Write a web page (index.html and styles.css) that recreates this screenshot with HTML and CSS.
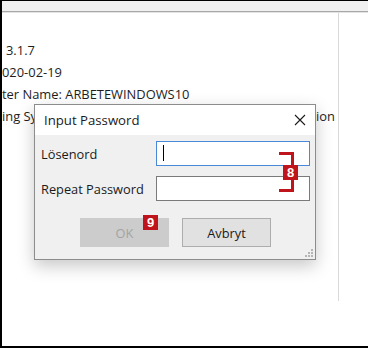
FILE: index.html
```html
<!DOCTYPE html>
<html>
<head>
<meta charset="utf-8">
<link rel="stylesheet" href="styles.css">
</head>
<body>
<div class="frame">
  <div class="topbar"></div>
  <div class="content">
    <div class="panel">
      <div class="line l1">3.1.7</div>
      <div class="line">020-02-19</div>
      <div class="line">ter Name: ARBETEWINDOWS10</div>
      <div class="line split"><span>ing Sy</span><span>ion</span></div>
    </div>
  </div>

  <div class="dialog">
    <div class="titlebar">
      <span class="title">Input Password</span>
      <svg class="close" width="12" height="12" viewBox="0 0 12 12"><path d="M1 1L11 11M11 1L1 11" stroke="#1a1a1a" stroke-width="1.1" fill="none"/></svg>
    </div>
    <div class="body">
      <div class="form">
        <label class="lbl">Lösenord</label>
        <div class="input focus"><span class="caret"></span></div>
        <label class="lbl">Repeat Password</label>
        <div class="input"></div>
      </div>
      <div class="buttons">
        <div class="btn disabled">OK</div>
        <div class="btn">Avbryt</div>
      </div>
    </div>
    <svg class="grip" width="10" height="10" viewBox="0 0 10 10">
      <rect x="8" y="2" width="2" height="2" fill="#b5b5b5"/>
      <rect x="5" y="5" width="2" height="2" fill="#b5b5b5"/>
      <rect x="8" y="5" width="2" height="2" fill="#b5b5b5"/>
      <rect x="2" y="8" width="2" height="2" fill="#b5b5b5"/>
      <rect x="5" y="8" width="2" height="2" fill="#b5b5b5"/>
      <rect x="8" y="8" width="2" height="2" fill="#b5b5b5"/>
    </svg>
  </div>

  <div class="bracket"></div>
  <div class="badge b8">8</div>
  <div class="badge b9">9</div>
</div>
</body>
</html>
```

FILE: styles.css
```css
html, body {
  margin: 0;
  padding: 0;
  background: #ffffff;
}
.frame {
  position: relative;
  width: 368px;
  height: 348px;
  box-sizing: border-box;
  border-top: 1px solid #000;
  border-left: 2px solid #000;
  border-bottom: 2px solid #000;
  overflow: hidden;
  font-family: "Open Sans", "Noto Sans", sans-serif;
  color: #1e1e1e;
  display: flex;
  flex-direction: column;
}
.topbar {
  height: 10px;
  background: #f0f0f0;
  border-bottom: 1px solid #a8a8a8;
  flex: none;
}
.content {
  flex: 1;
  display: flex;
  align-items: flex-start;
  border-top: 1px solid #e3e3e3;
}
.panel {
  width: 336px;
  height: 262px;
  border-right: 1px solid #d9d9d9;
  padding-top: 26px;
  overflow: hidden;
  white-space: nowrap;
  font-size: 12.9px;
}
.line {
  height: 22px;
  line-height: 22px;
}
.l1 {
  padding-left: 4px;
}
.split {
  display: flex;
  justify-content: space-between;
  padding-right: 3px;
}
.dialog {
  position: absolute;
  left: 32px;
  top: 103px;
  width: 282px;
  height: 156px;
  box-sizing: border-box;
  border: 1px solid #8c8c8c;
  background: #f0f0f0;
  box-shadow: 0 6px 16px rgba(0,0,0,0.22);
  display: flex;
  flex-direction: column;
  font-size: 12.8px;
}
.titlebar {
  height: 30px;
  background: #ffffff;
  display: flex;
  align-items: center;
  justify-content: space-between;
  padding: 0 9px 0 9px;
  flex: none;
}
.title {
  font-size: 13.2px;
  color: #1a1a1a;
}
.body {
  flex: 1;
  padding: 6px 5px 0 6px;
  display: flex;
  flex-direction: column;
}
.form {
  display: grid;
  grid-template-columns: 115px 154px;
  row-gap: 10px;
  align-items: center;
}
.lbl {
  color: #1a1a1a;
}
.input {
  height: 25px;
  box-sizing: border-box;
  border: 1px solid #7a7a7a;
  background: #fff;
  position: relative;
}
.input.focus {
  border-color: #4a88d8;
}
.caret {
  position: absolute;
  left: 6px;
  top: 3px;
  width: 1px;
  height: 16px;
  background: #000;
}
.buttons {
  margin-top: 17px;
  display: flex;
  justify-content: center;
  gap: 13px;
}
.btn {
  width: 89px;
  height: 29px;
  box-sizing: border-box;
  border: 1px solid #adadad;
  background: #e1e1e1;
  display: flex;
  align-items: center;
  justify-content: center;
  color: #1a1a1a;
}
.btn.disabled {
  background: #cccccc;
  border-color: #cccccc;
  color: #a3a3a3;
}
.grip {
  position: absolute;
  right: 2px;
  bottom: 2px;
}
.badge {
  position: absolute;
  width: 15px;
  height: 15px;
  background: #c0141c;
  color: #fff;
  font-family: "Liberation Sans", Arial, sans-serif;
  font-weight: bold;
  font-size: 13px;
  line-height: 15px;
  text-align: center;
}
.b8 {
  left: 281px;
  top: 164px;
}
.b9 {
  left: 141px;
  top: 214px;
}
.bracket {
  position: absolute;
  left: 277px;
  top: 151px;
  width: 12px;
  height: 34px;
  border: 3px solid #c0141c;
  border-left: none;
}
```
